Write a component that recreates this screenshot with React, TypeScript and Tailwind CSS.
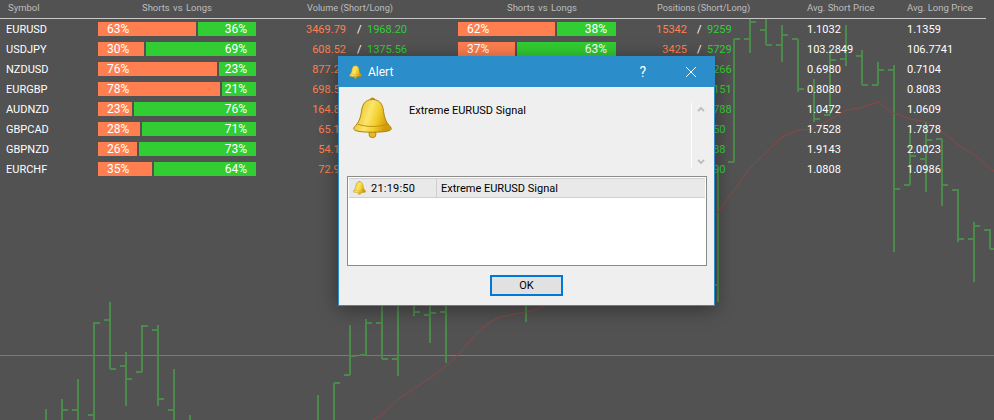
import { useId } from "react";

type Row = {
  symbol: string;
  pctA: [number, number];
  widthA: number;
  volShort: string;
  volLong: string;
  pctB: [number, number];
  widthB: number;
  posShort: string;
  posLong: string;
  avgShort: string;
  avgLong: string;
};

const ROWS: Row[] = [
  { symbol: "EURUSD", pctA: [63, 36], widthA: 98, volShort: "3469.79", volLong: "1968.20", pctB: [62, 38], widthB: 97, posShort: "15342", posLong: "9259", avgShort: "1.1032", avgLong: "1.1359" },
  { symbol: "USDJPY", pctA: [30, 69], widthA: 46, volShort: "608.52", volLong: "1375.56", pctB: [37, 63], widthB: 57, posShort: "3425", posLong: "5729", avgShort: "103.2849", avgLong: "106.7741" },
  { symbol: "NZDUSD", pctA: [76, 23], widthA: 119, volShort: "877.24", volLong: "262.18", pctB: [74, 26], widthB: 116, posShort: "11850", posLong: "4266", avgShort: "0.6980", avgLong: "0.7104" },
  { symbol: "EURGBP", pctA: [78, 21], widthA: 122, volShort: "698.50", volLong: "190.42", pctB: [72, 28], widthB: 113, posShort: "8020", posLong: "3151", avgShort: "0.8080", avgLong: "0.8083" },
  { symbol: "AUDNZD", pctA: [23, 76], widthA: 34, volShort: "164.80", volLong: "541.36", pctB: [29, 71], widthB: 45, posShort: "1140", posLong: "2788", avgShort: "1.0472", avgLong: "1.0609" },
  { symbol: "GBPCAD", pctA: [28, 71], widthA: 42, volShort: "65.16", volLong: "165.02", pctB: [33, 67], widthB: 52, posShort: "172", posLong: "350", avgShort: "1.7528", avgLong: "1.7878" },
  { symbol: "GBPNZD", pctA: [26, 73], widthA: 39, volShort: "54.12", volLong: "152.64", pctB: [31, 69], widthB: 49, posShort: "306", posLong: "688", avgShort: "1.9143", avgLong: "2.0023" },
  { symbol: "EURCHF", pctA: [35, 64], widthA: 54, volShort: "72.94", volLong: "134.50", pctB: [38, 62], widthB: 60, posShort: "362", posLong: "590", avgShort: "1.0808", avgLong: "1.0986" },
];

// x, top, bottom, left tick y, right tick y
const OHLC: [number, number, number, number | null, number | null][] = [
  [46, 409, 420, null, null],
  [62, 399, 420, null, 410],
  [78, 379, 420, 410, null],
  [94, 322, 420, 415, 323],
  [110, 302, 369, 320, 369],
  [126, 352, 406, 366, 379],
  [142, 325, 372, 372, 326],
  [158, 325, 406, 330, 399],
  [174, 369, 420, 410, null],
  [190, 415, 420, null, null],
  [318, 395, 420, null, null],
  [334, 383, 420, null, 383],
  [350, 325, 375, 375, 356],
  [366, 319, 355, 355, 323],
  [382, 290, 359, 323, 359],
  [398, 290, 376, 359, null],
  [414, 290, 316, null, 312],
  [430, 290, 343, 315, 313],
  [446, 290, 363, 312, null],
  [526, 290, 322, null, null],
  [718, 170, 302, 285, null],
  [734, 39, 162, 162, 39],
  [750, 19, 53, 39, 22],
  [766, 19, 45, 30, 45],
  [782, 25, 62, 45, 35],
  [798, 39, 92, 39, 89],
  [814, 79, 122, null, 119],
  [830, 50, 115, 115, 60],
  [846, 25, 66, 59, null],
  [862, 50, 85, 56, 85],
  [878, 62, 85, 85, 70],
  [894, 65, 252, 70, 189],
  [910, 132, 185, 185, 156],
  [926, 122, 192, 159, 140],
  [942, 139, 206, 139, 185],
  [958, 189, 242, 190, 239],
  [974, 222, 282, 239, 226],
  [990, 229, 249, 230, 249],
];

const AVERAGE =
  "373,420 382,415 400,398 430,378 447,365 458,355 468,343 478,332 490,322 500,317 535,310 545,305 715,216 750,168 782,137 798,130 813,129 847,110 860,108 878,102 893,113 910,119 927,122 940,130 960,146 977,157 994,171";

function Chart() {
  return (
    <svg className="absolute inset-0" width={994} height={420} shapeRendering="crispEdges">
      <line x1={0} y1={355.5} x2={994} y2={355.5} stroke="#7b7b7b" />
      {OHLC.map(([x, top, bottom, left, right]) => (
        <g key={x} stroke="#4b8a4b" strokeWidth={2}>
          <line x1={x} y1={top} x2={x} y2={bottom} />
          {left !== null && <line x1={x - 6} y1={left} x2={x} y2={left} />}
          {right !== null && <line x1={x} y1={right} x2={x + 6} y2={right} />}
        </g>
      ))}
      <polyline points={AVERAGE} fill="none" stroke="#8f4646" shapeRendering="auto" />
    </svg>
  );
}

function Bell({ size }: { size: number }) {
  const id = useId();
  return (
    <svg width={size} height={size * 1.08} viewBox="0 0 40 43" className="shrink-0">
      <defs>
        <linearGradient id={id} x1="0" y1="0" x2="1" y2="0.3">
          <stop offset="0" stopColor="#e3b10c" />
          <stop offset="0.5" stopColor="#fbe56a" />
          <stop offset="0.72" stopColor="#f2cf2e" />
          <stop offset="1" stopColor="#d29c08" />
        </linearGradient>
      </defs>
      <circle cx="20" cy="38" r="3.6" fill="#e9bb22" stroke="#a97f12" strokeWidth="0.9" />
      <circle cx="20" cy="3.5" r="2.6" fill="#c79a1a" stroke="#a97f12" strokeWidth="0.8" />
      <path
        d="M20 2.5C12 2.5 9.5 8 8.6 15C7.8 21.5 6 26 1.2 31C0.2 32.4 1 34 3 34.5C10 36.6 30 36.6 37 34.5C39 34 39.8 32.4 38.8 31C34 26 32.2 21.5 31.4 15C30.5 8 28 2.5 20 2.5Z"
        fill={`url(#${id})`}
        stroke="#a97f12"
        strokeWidth="1"
      />
      <path d="M4.5 27.5C13 31 27 31 35.5 27.5" fill="none" stroke="#bd8f10" strokeWidth="1" />
    </svg>
  );
}

function SplitBar({ pct, width }: { pct: [number, number]; width: number }) {
  return (
    <div className="flex h-[14px] w-[158px] gap-[2px] text-[12px] leading-[15px] text-white">
      <div className="bg-[#ff7f50] pl-[9px] shrink-0" style={{ width }}>
        {pct[0]}%
      </div>
      <div className="flex-1 bg-[#32cd32] pr-[9px] text-right">{pct[1]}%</div>
    </div>
  );
}

const COLUMNS = "grid grid-cols-[92px_158px_90px_21px_91px_158px_71px_20px_100px_100px_1fr] pl-[6px]";

function Table() {
  return (
    <div className="relative w-[986px]">
      <div className={`${COLUMNS} h-[19px] border-b border-[#c8c8c8] text-[9.5px] leading-[15px] text-[#bdbdbd]`}>
        <div className="pl-[2px]">Symbol</div>
        <div className="pl-[44px] [word-spacing:1px]">Shorts vs Longs</div>
        <div className="col-span-3 pl-[51px] text-[9.2px]">Volume (Short/Long)</div>
        <div className="pl-[49px] [word-spacing:1px]">Shorts vs Longs</div>
        <div className="col-span-3 pl-[41px] text-[9.2px]">Positions (Short/Long)</div>
        <div>Avg. Short Price</div>
        <div>Avg. Long Price</div>
      </div>
      <div className="flex flex-col gap-[4px] pt-[3px] text-[11px] leading-[16px]">
        {ROWS.map((r) => (
          <div key={r.symbol} className={COLUMNS}>
            <div className="text-white">{r.symbol}</div>
            <SplitBar pct={r.pctA} width={r.widthA} />
            <div className="text-right text-[#ff7f50]">{r.volShort}</div>
            <div className="pl-[11px] text-white">/</div>
            <div className="text-[#32cd32]">{r.volLong}</div>
            <SplitBar pct={r.pctB} width={r.widthB} />
            <div className="text-right text-[#ff7f50]">{r.posShort}</div>
            <div className="pl-[10px] text-white">/</div>
            <div className="text-[#32cd32]">{r.posLong}</div>
            <div className="text-white">{r.avgShort}</div>
            <div className="text-white">{r.avgLong}</div>
          </div>
        ))}
      </div>
    </div>
  );
}

function AlertDialog() {
  return (
    <div className="absolute left-[338px] top-[56px] flex h-[250px] w-[377px] flex-col border border-[#2b8dc9] bg-[#efefef] shadow-[0_3px_18px_rgba(0,0,0,0.4)]">
      {/* Title bar */}
      <div className="flex h-[30px] items-center bg-[#2b8dc9] pl-[10px] text-white">
        <Bell size={13} />
        <span className="ml-[6px] pb-px text-[12px]">Alert</span>
        <span className="ml-auto text-[14px]">?</span>
        <svg width="12" height="12" viewBox="0 0 12 12" className="ml-[39px] mr-[17px]">
          <path d="M1 1L11 11M11 1L1 11" stroke="#fff" strokeWidth="1" fill="none" />
        </svg>
      </div>

      {/* Message */}
      <div className="flex h-[89px] pl-[14px] pt-[10px]">
        <Bell size={39} />
        <p className="ml-[17px] mt-[7px] w-[282px] text-[11px] leading-[14px] text-black">Extreme EURUSD Signal</p>
        <div className="mt-[6px] flex h-[65px] w-[16px] flex-col items-center justify-between border-l border-white py-[3px] pl-[2px]">
          <svg width="8" height="6" viewBox="0 0 8 6">
            <path d="M1 5L4 2L7 5" stroke="#bdbdbd" strokeWidth="1.8" fill="none" />
          </svg>
          <svg width="8" height="6" viewBox="0 0 8 6">
            <path d="M1 1L4 4L7 1" stroke="#bdbdbd" strokeWidth="1.8" fill="none" />
          </svg>
        </div>
      </div>

      {/* History list */}
      <div className="ml-[8px] mr-[7px] h-[90px] border border-[#8a8a8a] bg-white p-px">
        <div className="flex h-[20px] items-center border-y border-[#cfcfcf] bg-[#e9e9e9] text-[11px] leading-[16px] text-black">
          <div className="flex h-full w-[88px] items-center gap-[5px] border-r border-[#cfcfcf] pl-[4px]">
            <Bell size={13} />
            <span className="pt-px tracking-[0.2px]">21:19:50</span>
          </div>
          <span className="pl-[4px] pt-px">Extreme EURUSD Signal</span>
        </div>
      </div>

      {/* Footer */}
      <div className="flex flex-1 items-center justify-center">
        <button className="h-[21px] w-[73px] border-2 border-[#0078d7] bg-[#e1e1e1] pt-px text-[11px] leading-[16px] text-black">
          OK
        </button>
      </div>
    </div>
  );
}

export default function App() {
  return (
    <div className="relative h-[420px] w-[994px] overflow-hidden bg-[#525252] font-['Roboto',sans-serif]">
      <Chart />
      <Table />
      <AlertDialog />
    </div>
  );
}
